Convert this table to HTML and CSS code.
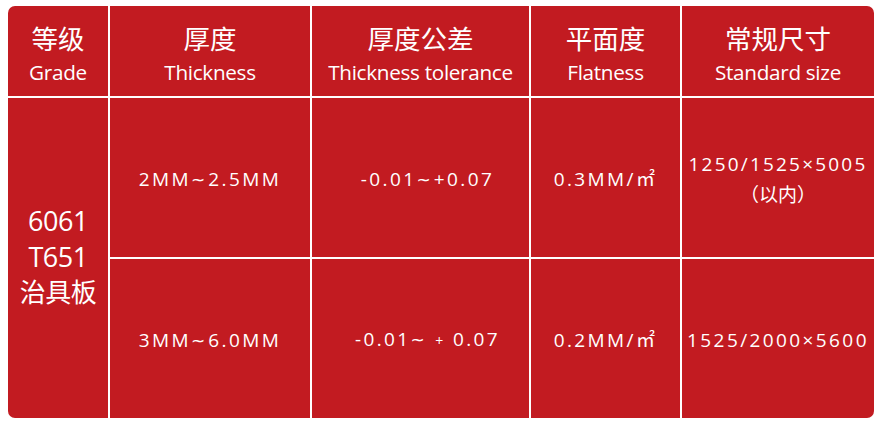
FILE: index.html
```html
<!DOCTYPE html>
<html lang="zh">
<head>
<meta charset="utf-8">
<title>6061 T651 治具板</title>
<link rel="stylesheet" href="styles.css">
</head>
<body>
<div class="page">
  <div class="spec">
    <div class="cell head tl"><span class="zh">等级</span><span class="en">Grade</span></div>
    <div class="cell head"><span class="zh">厚度</span><span class="en">Thickness</span></div>
    <div class="cell head"><span class="zh">厚度公差</span><span class="en">Thickness tolerance</span></div>
    <div class="cell head"><span class="zh">平面度</span><span class="en">Flatness</span></div>
    <div class="cell head tr"><span class="zh">常规尺寸</span><span class="en">Standard size</span></div>

    <div class="cell grade bl"><span>6061</span><span>T651</span><span class="zh">治具板</span></div>
    <div class="cell val"><span>2MM<span class="tilde">~</span>2.5MM</span></div>
    <div class="cell val tol"><span>-0.01<span class="tilde">~</span>+0.07</span></div>
    <div class="cell val"><span>0.3MM/㎡</span></div>
    <div class="cell val size"><span>1250/1525×5005</span><span class="note">（以内）</span></div>

    <div class="cell val"><span>3MM<span class="tilde">~</span>6.0MM</span></div>
    <div class="cell val tol"><span>-0.01<span class="tilde">~</span> <span class="plus">+</span> 0.07</span></div>
    <div class="cell val"><span>0.2MM/㎡</span></div>
    <div class="cell val br"><span>1525/2000×5600</span></div>
  </div>
</div>
</body>
</html>
```
FILE: styles.css
```css
html, body {
  margin: 0;
  padding: 0;
  background: #ffffff;
}

.page {
  padding: 6px 0 0 8px;
}

.spec {
  display: grid;
  grid-template-columns: 100px 200px 217px 149px 192px;
  grid-template-rows: 90px 159px 159px;
  gap: 2px;
  width: 866px;
  font-family: "Open Sans", "Noto Sans CJK SC", sans-serif;
  color: #ffffff;
}

.cell {
  background: #c21b21;
  display: flex;
  flex-direction: column;
  align-items: center;
  justify-content: center;
  text-align: center;
}

.head {
  padding-top: 6px;
}

.tl { border-top-left-radius: 7px; }
.tr { border-top-right-radius: 7px; }
.bl { border-bottom-left-radius: 7px; }
.br { border-bottom-right-radius: 7px; }

.head .zh {
  font-family: "Noto Sans CJK SC", sans-serif;
  font-size: 26.5px;
  line-height: 32px;
}

.head .en {
  font-size: 20.7px;
  line-height: 30px;
  letter-spacing: -0.3px;
  padding-top: 3px;
}

.grade {
  grid-row: 2 / span 2;
  font-size: 27px;
  line-height: 36px;
  letter-spacing: -0.5px;
  padding-bottom: 6px;
}

.grade .zh {
  font-family: "Noto Sans CJK SC", sans-serif;
  font-size: 26px;
  line-height: 32px;
}

.val {
  font-size: 19px;
  line-height: 30px;
  letter-spacing: 2.4px;
  padding-top: 3px;
}

.tilde {
  font-family: "DejaVu Sans", sans-serif;
  font-size: 17px;
  letter-spacing: 3px;
}

.tol {
  padding-left: 14px;
}

.plus {
  font-size: 14px;
}

.size {
  letter-spacing: 2.2px;
}

.size .note {
  font-family: "Noto Sans CJK SC", sans-serif;
  font-size: 19px;
  letter-spacing: 0;
}
```
